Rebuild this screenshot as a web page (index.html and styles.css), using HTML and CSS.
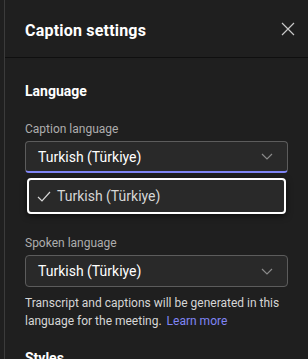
FILE: index.html
```html
<!DOCTYPE html>
<html lang="en">
<head>
    <meta charset="UTF-8">
    <meta name="viewport" content="width=device-width, initial-scale=1.0">
    <title>Caption settings</title>
    <link rel="stylesheet" href="styles.css">
</head>
<body>
    <div class="panel">
        <div class="header">
            <h1>Caption settings</h1>
            <button class="close" aria-label="Close">
                <svg width="14" height="14" viewBox="0 0 14 14"><path d="M1 1 L13 13 M13 1 L1 13" stroke="#c8c8c8" stroke-width="1.2" fill="none"/></svg>
            </button>
        </div>
        <div class="content">
            <h2>Language</h2>

            <div class="field">
                <label>Caption language</label>
                <div class="dropdown open">
                    <span>Turkish (Türkiye)</span>
                    <svg class="chevron" width="12" height="7" viewBox="0 0 12 7"><path d="M1 1 L6 6 L11 1" stroke="#8a8a8a" stroke-width="1.2" fill="none"/></svg>
                </div>
                <div class="listbox">
                    <div class="option">
                        <svg class="check" width="14" height="11" viewBox="0 0 14 11"><path d="M1 6 L5 10 L13 1" stroke="#d6d6d6" stroke-width="1.2" fill="none"/></svg>
                        <span>Turkish (Türkiye)</span>
                    </div>
                </div>
            </div>

            <div class="field">
                <label>Spoken language</label>
                <div class="dropdown">
                    <span>Turkish (Türkiye)</span>
                    <svg class="chevron" width="12" height="7" viewBox="0 0 12 7"><path d="M1 1 L6 6 L11 1" stroke="#8a8a8a" stroke-width="1.2" fill="none"/></svg>
                </div>
                <p class="help">Transcript and captions will be generated in this language for the meeting. <a href="#">Learn more</a></p>
            </div>

            <h2>Styles</h2>
        </div>
    </div>
</body>
</html>
```

FILE: styles.css
```css
body {
    margin: 0;
    background-color: #1f1f1f;
    font-family: 'Roboto', sans-serif;
    color: #ffffff;
    overflow: hidden;
}
.panel {
    margin-left: 4px;
    border-left: 1px solid #3b3b3b;
    height: 100vh;
}
.header {
    display: flex;
    justify-content: space-between;
    align-items: center;
    height: 57px;
    padding: 0 13px 0 20px;
    border-bottom: 1px solid #0f0f0f;
}
h1 {
    font-size: 16px;
    font-weight: 700;
    margin: 0;
    margin-top: 4px;
    letter-spacing: 0.2px;
}
.close {
    background: none;
    border: none;
    padding: 0;
    width: 14px;
    height: 14px;
    display: flex;
}
.content {
    padding: 25px 20px 0 20px;
}
h2 {
    font-size: 14px;
    font-weight: 700;
    margin: 0 0 23px 0;
}
.field {
    margin-bottom: 22px;
}
.field + .field {
    margin-bottom: 20px;
}
label {
    display: block;
    font-size: 12px;
    color: #adadad;
    margin-bottom: 5px;
}
.dropdown {
    display: flex;
    justify-content: space-between;
    align-items: center;
    height: 30px;
    padding: 0 14px 0 12px;
    background-color: #292929;
    border: 1px solid #5c5c5c;
    border-radius: 4px;
    font-size: 14px;
}
.dropdown.open {
    border-bottom: 2px solid #7f85f5;
    height: 29px;
}
.listbox {
    margin: 5px 2px 0 2px;
    background-color: #292929;
    border: 2px solid #ffffff;
    border-radius: 4px;
    box-shadow: 0 2px 6px rgba(0, 0, 0, 0.6);
}
.option {
    display: flex;
    align-items: center;
    height: 32px;
    padding: 0 8px;
    font-size: 14px;
    color: #d6d6d6;
}
.check {
    margin-right: 6px;
}
.help {
    font-size: 12px;
    line-height: 18px;
    color: #d6d6d6;
    margin: 7px 0 0 0;
}
.help a {
    color: #7f85f5;
    text-decoration: none;
    margin-left: 2px;
}
```
